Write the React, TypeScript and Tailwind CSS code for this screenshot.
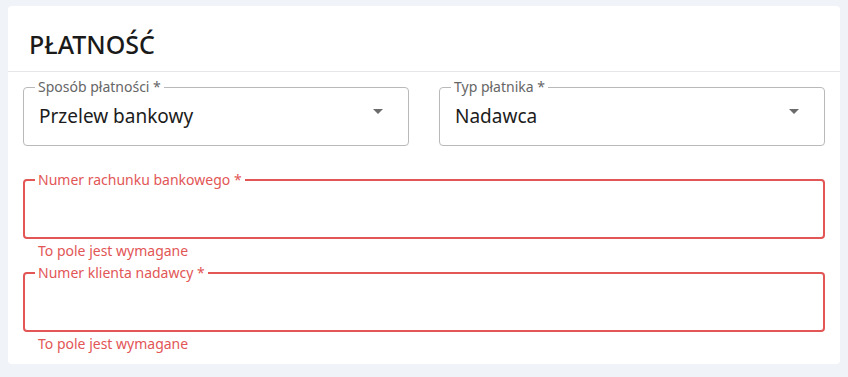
import { ReactNode } from 'react';

function DropArrow() {
  return (
    <svg width="24" height="24" viewBox="0 0 24 24" className="mt-[4px] shrink-0 fill-[#6b6b6b]">
      <path d="M7 10l5 5 5-5z" />
    </svg>
  );
}

function SelectField({ label, value }: { label: string; value: string }) {
  return (
    <fieldset className="m-0 min-w-0 rounded-[4px] border border-[#b9b9b9] p-0">
      <legend className="ml-[11px] px-[3px] text-[14px] leading-[16px] text-[#666666]">{label}</legend>
      <div className="flex h-[50px] items-start justify-between pl-[15px] pr-[18px]">
        <span className="mt-[9px] text-[19px] leading-[24px] text-[#1c1c1c]">{value}</span>
        <DropArrow />
      </div>
    </fieldset>
  );
}

function ErrorField({ label, children }: { label: string; children?: ReactNode }) {
  return (
    <div>
      <fieldset className="m-0 min-w-0 rounded-[4px] border-2 border-[#e25656] p-0">
        <legend className="ml-[10px] px-[3px] text-[14px] leading-[16px] text-[#e25656]">{label}</legend>
        <div className="h-[49px]">{children}</div>
      </fieldset>
      <p className="ml-[15px] mt-[4px] text-[14px] leading-[16px] text-[#e25656]">To pole jest wymagane</p>
    </div>
  );
}

export default function App() {
  return (
    <div
      className="min-h-[377px] bg-[#f0f4f8] px-[8px] pt-[6px] pb-[14px]"
      style={{ fontFamily: '"Noto Sans", Roboto, "Liberation Sans", sans-serif' }}
    >
      <div className="rounded-[4px] bg-white">
        {/* nagłówek */}
        <div className="border-b border-[#e4e6e9] px-[21px] pt-[22px] pb-[11px]">
          <h2 className="text-[25px] font-medium leading-[32px] text-[#1a1a1a]">PŁATNOŚĆ</h2>
        </div>

        <div className="px-[15px] pt-[7px] pb-[12px]">
          <div className="grid grid-cols-2 gap-[30px]">
            <SelectField label="Sposób płatności *" value="Przelew bankowy" />
            <SelectField label="Typ płatnika *" value="Nadawca" />
          </div>

          <div className="mt-[26px] flex flex-col gap-[6px]">
            <ErrorField label="Numer rachunku bankowego *" />
            <ErrorField label="Numer klienta nadawcy *" />
          </div>
        </div>
      </div>
    </div>
  );
}
